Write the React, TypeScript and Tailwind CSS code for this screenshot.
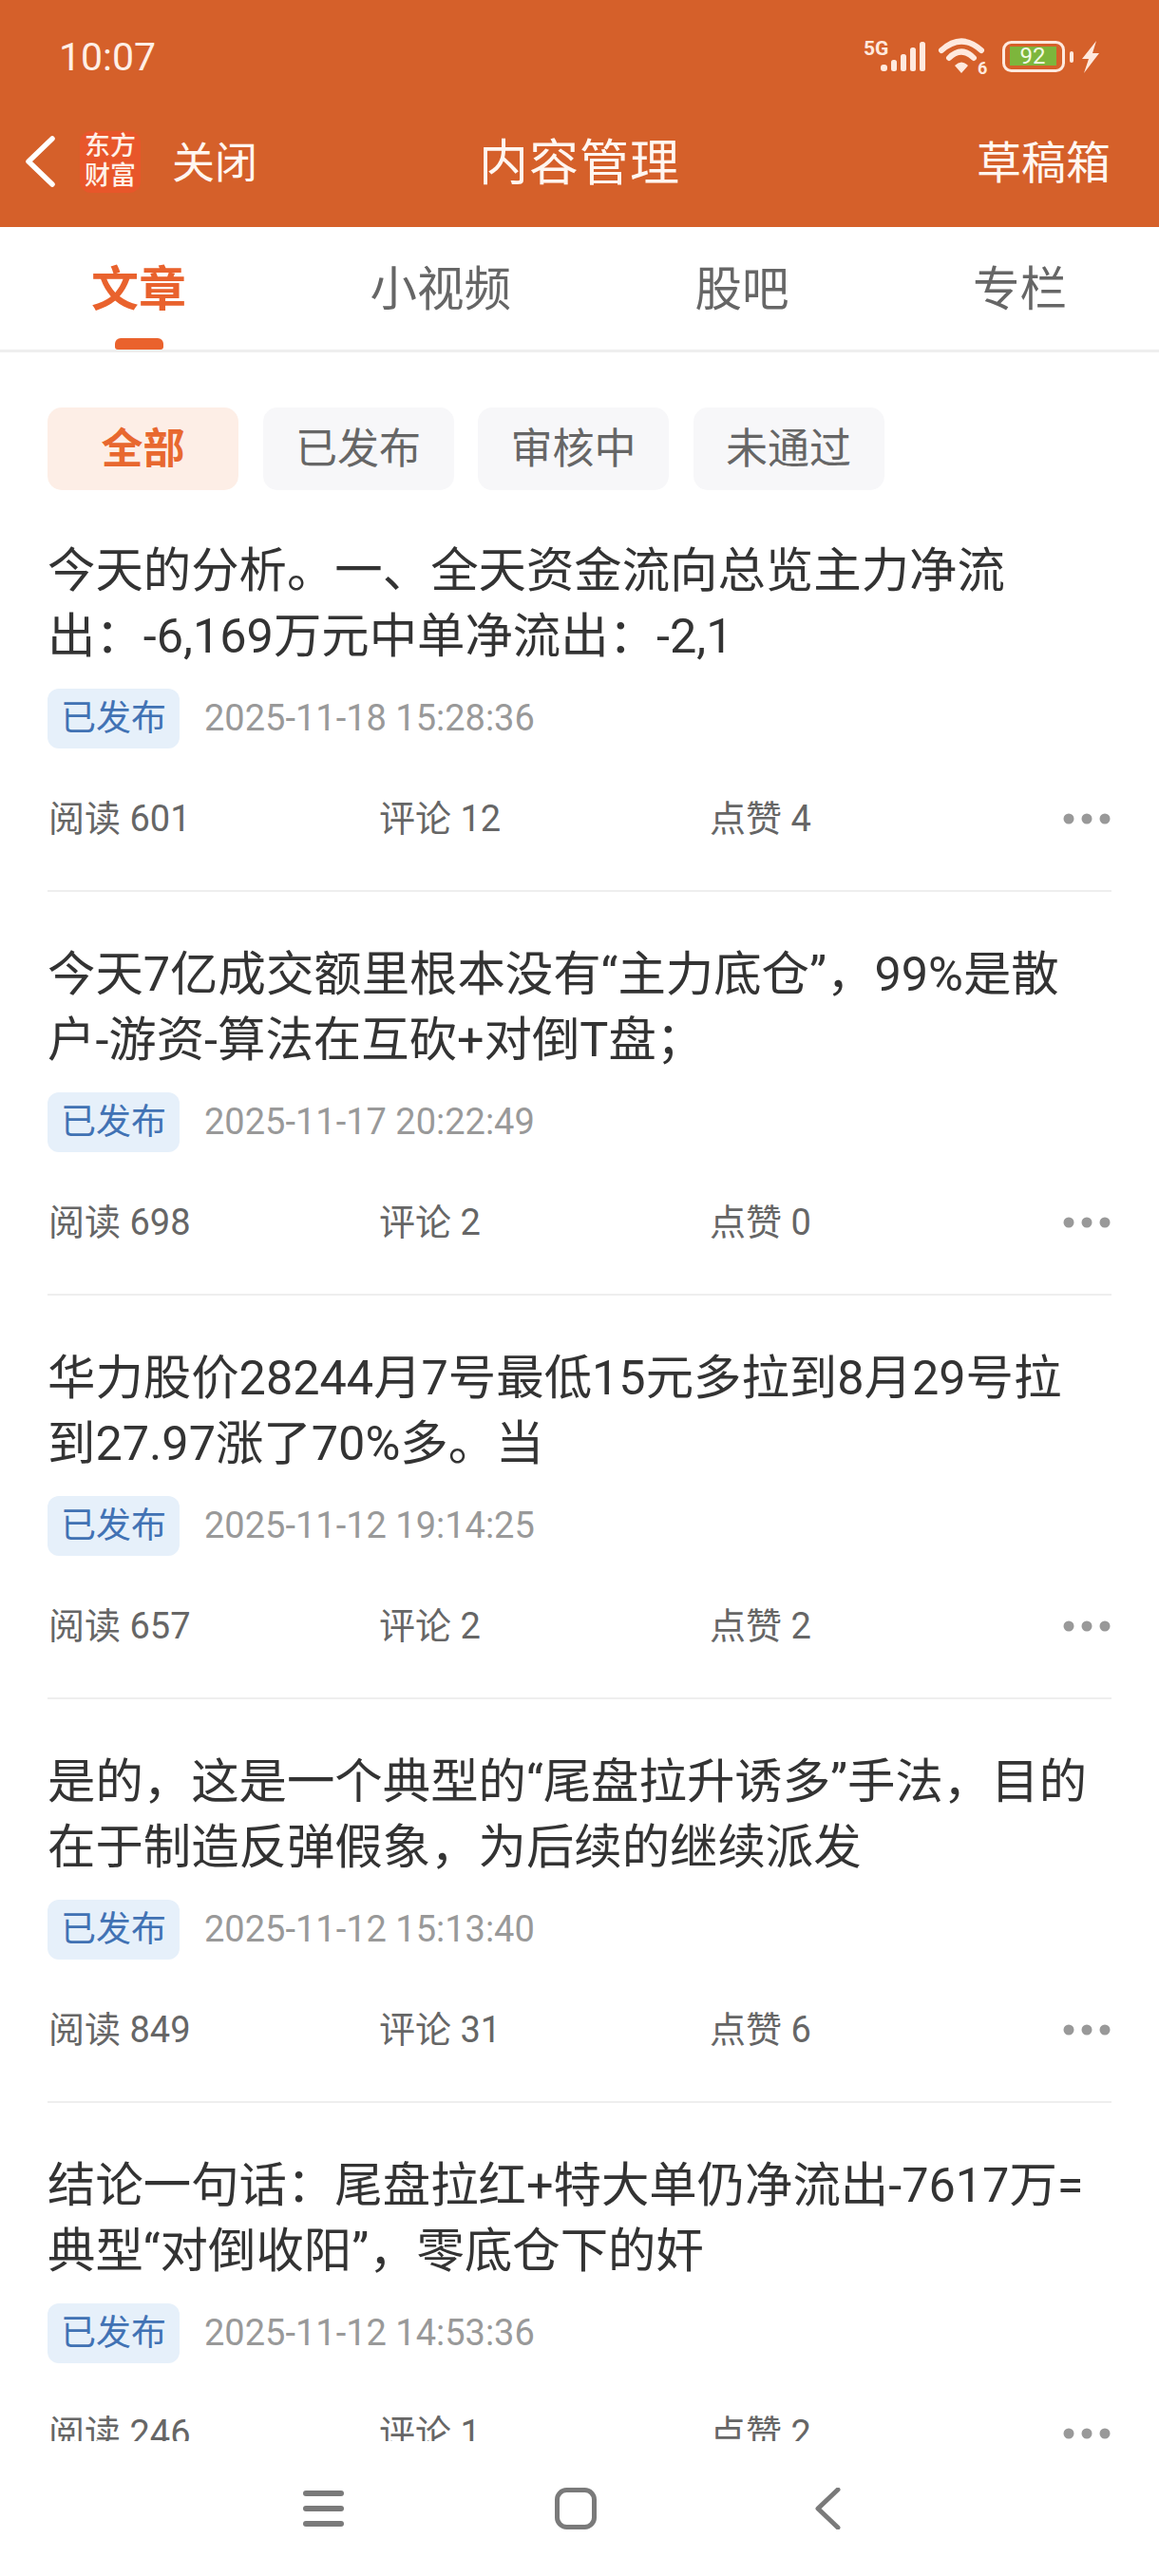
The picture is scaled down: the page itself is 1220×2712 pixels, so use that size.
const articles = [
  {
    lines: ['今天的分析。一、全天资金流向总览主力净流', '出：-6,169万元中单净流出：-2,1'],
    time: '2025-11-18 15:28:36',
    read: 601,
    comment: 12,
    like: 4,
  },
  {
    lines: ['今天7亿成交额里根本没有“主力底仓”，99%是散', '户-游资-算法在互砍+对倒T盘；'],
    time: '2025-11-17 20:22:49',
    read: 698,
    comment: 2,
    like: 0,
  },
  {
    lines: ['华力股价28244月7号最低15元多拉到8月29号拉', '到27.97涨了70%多。当'],
    time: '2025-11-12 19:14:25',
    read: 657,
    comment: 2,
    like: 2,
  },
  {
    lines: ['是的，这是一个典型的“尾盘拉升诱多”手法，目的', '在于制造反弹假象，为后续的继续派发'],
    time: '2025-11-12 15:13:40',
    read: 849,
    comment: 31,
    like: 6,
  },
  {
    lines: ['结论一句话：尾盘拉红+特大单仍净流出-7617万=', '典型“对倒收阳”，零底仓下的奸'],
    time: '2025-11-12 14:53:36',
    read: 246,
    comment: 1,
    like: 2,
  },
];

const filters = ['全部', '已发布', '审核中', '未通过'];

function StatusIcons() {
  return (
    <svg width="255" height="40" viewBox="905 40 255 40" className="block">
      <text x="909" y="58" fontSize="21" fontWeight="700" fill="#FFE9DE" fontFamily="Roboto, sans-serif">5G</text>
      {/* signal */}
      <g fill="#FFE9DE">
        <rect x="927" y="68" width="7" height="7" rx="3" />
        <rect x="938" y="63" width="6" height="12" rx="2.5" />
        <rect x="948" y="57" width="6" height="18" rx="2.5" />
        <rect x="958" y="50" width="6" height="25" rx="2.5" />
        <rect x="968" y="44" width="6" height="31" rx="2.5" />
      </g>
      {/* wifi */}
      <g fill="none" stroke="#FFE9DE" strokeWidth="6" strokeLinecap="round">
        <path d="M991 53 Q1012 34 1033 53" />
        <path d="M999 61 Q1012 48 1025 61" />
      </g>
      <path d="M1005 69 Q1012 62 1019 69 L1012 77 Z" fill="#FFE9DE" />
      <text x="1029" y="78" fontSize="18" fontWeight="700" fill="#FFE9DE" fontFamily="Roboto, sans-serif">6</text>
      {/* battery */}
      <rect x="1056.5" y="44.5" width="63" height="30" rx="8" fill="none" stroke="#FFE9DE" strokeWidth="3" />
      <rect x="1063" y="49" width="49" height="20" fill="#7DB63C" />
      <text x="1087" y="67" fontSize="24" textAnchor="middle" fill="#F2FBE4" fontFamily="Roboto, sans-serif">92</text>
      <rect x="1126" y="54" width="4" height="12" rx="2" fill="#FFE9DE" />
      {/* bolt */}
      <path d="M1154 43 L1139 62 L1146 62 L1141 77 L1157 56 L1150 56 Z" fill="#FFE9DE" />
    </svg>
  );
}

function ArticleItem({ item, last }: { item: (typeof articles)[number]; last: boolean }) {
  return (
    <div className={last ? 'pt-[52px]' : 'pt-[52px] border-b-[2px] border-[#EEEEEE]'}>
      <div className="text-[50.4px] leading-[69px] text-[#333333] whitespace-nowrap">
        {item.lines.map(line => (
          <div key={line}>{line}</div>
        ))}
      </div>
      <div className="flex items-center mt-[21px]">
        <span className="w-[139px] h-[63px] flex items-center justify-center rounded-[12px] bg-[#E6F0FA] text-[#4172B4] text-[37px]">
          已发布
        </span>
        <span className="ml-[26px] text-[38px] text-[#999999]">{item.time}</span>
      </div>
      <div className="flex items-center h-[50px] mt-[49px] mb-[50px] text-[38px] text-[#666666] whitespace-nowrap">
        <span className="w-[349px] pl-[1px]">阅读 {item.read}</span>
        <span className="w-[348px]">评论 {item.comment}</span>
        <span>点赞 {item.like}</span>
        <svg width="50" height="12" viewBox="0 0 50 12" className="block ml-auto mr-[1px]">
          <g fill="#999999">
            <circle cx="6" cy="6" r="5.5" />
            <circle cx="25" cy="6" r="5.5" />
            <circle cx="44" cy="6" r="5.5" />
          </g>
        </svg>
      </div>
    </div>
  );
}

export default function App() {
  return (
    <div
      lang="zh-CN"
      className="w-[1220px] h-[2712px] flex flex-col bg-white overflow-hidden [font-family:Roboto,'Noto_Sans_CJK_SC',sans-serif]"
    >
      {/* Header */}
      <header className="h-[239px] flex-shrink-0 bg-[#D5602A] text-white">
        <div className="h-[101px] pt-[19px] pl-[62px] pr-[60px] flex items-center justify-between">
          <span className="text-[41px] leading-none text-[#FFEFE6]">10:07</span>
          <StatusIcons />
        </div>
        <div className="h-[138px] flex items-center pl-[27px] pr-[51px]">
          <div className="w-[477px] flex items-center">
            <svg width="31" height="54" viewBox="0 0 31 54" fill="none" className="block">
              <path d="M28 3 L3 27 L28 51" stroke="white" strokeWidth="5.5" strokeLinecap="round" strokeLinejoin="round" />
            </svg>
            <div className="ml-[26px] w-[64px] h-[65px] rounded-[12px] bg-[#E8562A] flex flex-col items-center justify-center text-[27px] leading-[31px] font-medium text-[#FFF1E8]">
              <span>东方</span>
              <span>财富</span>
            </div>
            <span className="ml-[33px] pt-[5px] text-[45px] text-[#FFF6F0]">关闭</span>
          </div>
          <span className="pt-[5px] text-[52px] text-[#FFF6F0] tracking-[1px]">内容管理</span>
          <span className="ml-auto pt-[5px] text-[47px] text-[#FFF6F0]">草稿箱</span>
        </div>
      </header>

      {/* Tabs */}
      <nav className="h-[132px] flex-shrink-0 flex items-start justify-between pl-[96px] pr-[97px] border-b-[3px] border-[#EEEEEE]">
        <div className="relative h-[129px] pt-[3px] flex items-center">
          <span className="text-[50px] font-bold text-[#E9622D]">文章</span>
          <span className="absolute left-[25px] bottom-0 w-[51px] h-[12px] rounded-t-[6px] rounded-b-[3px] bg-[#EA622D]" />
        </div>
        {['小视频', '股吧', '专栏'].map(tab => (
          <div key={tab} className="h-[129px] pt-[3px] flex items-center text-[49.5px] text-[#666666]">
            {tab}
          </div>
        ))}
      </nav>

      {/* Content */}
      <main className="flex-1 min-h-0 overflow-hidden px-[50px] pt-[58px]">
        <div className="flex gap-[25.5px] -mb-[2px]">
          {filters.map((label, i) => (
            <span
              key={label}
              className={
                i === 0
                  ? 'w-[201px] h-[87px] flex items-center justify-center rounded-[15px] bg-[#FDEEE6] text-[#E8682F] text-[44px] font-bold'
                  : 'w-[201px] h-[87px] flex items-center justify-center rounded-[15px] bg-[#F7F7F9] text-[#666666] text-[44px]'
              }
            >
              {label}
            </span>
          ))}
        </div>
        {articles.map((item, i) => (
          <ArticleItem key={item.time} item={item} last={i === articles.length - 1} />
        ))}
      </main>

      {/* Android nav bar */}
      <footer className="h-[142px] flex-shrink-0 bg-white">
        <div className="h-full flex items-start pt-[49px] pl-[319px]">
          <svg width="43" height="44" viewBox="0 0 43 44" className="block">
            <g fill="#7A7A7A">
              <rect x="0" y="3" width="43" height="6" rx="3" />
              <rect x="0" y="19" width="43" height="6" rx="3" />
              <rect x="0" y="35" width="43" height="6" rx="3" />
            </g>
          </svg>
          <svg width="44" height="44" viewBox="0 0 44 44" className="block ml-[222px]">
            <rect x="2.5" y="2.5" width="39" height="39" rx="10" fill="none" stroke="#7A7A7A" strokeWidth="5" />
          </svg>
          <svg width="28" height="44" viewBox="0 0 28 44" fill="none" className="block ml-[229px]">
            <path d="M25 2 L4 22 L25 42" stroke="#7A7A7A" strokeWidth="5" strokeLinecap="round" strokeLinejoin="round" />
          </svg>
        </div>
      </footer>
    </div>
  );
}
